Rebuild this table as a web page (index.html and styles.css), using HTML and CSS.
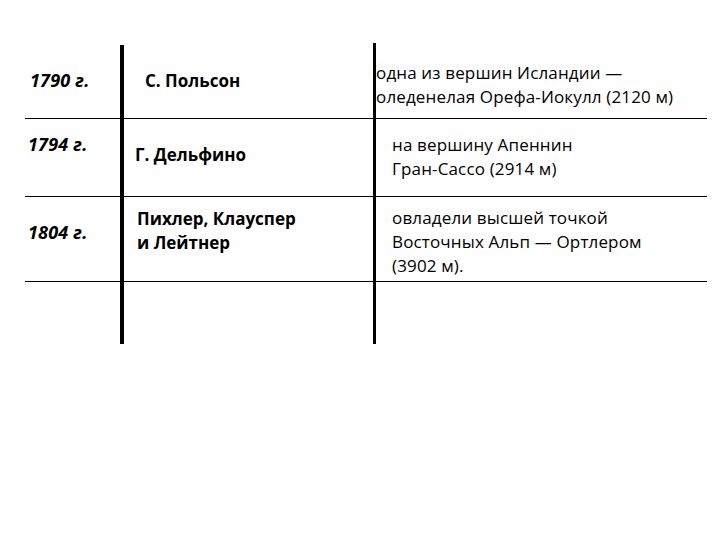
FILE: index.html
```html
<!DOCTYPE html>
<html lang="ru">
<head>
<meta charset="utf-8">
<title>Восхождения</title>
<link rel="stylesheet" href="styles.css">
</head>
<body>
<div class="table">
  <div class="row r1">
    <div class="cell c1"><span class="year y1">1790 г.</span></div>
    <div class="cell c2"><div class="name n1">С. Польсон</div></div>
    <div class="cell c3"><div class="desc d1">одна из вершин Исландии —<br>оледенелая Орефа-Иокулл (2120 м)</div></div>
  </div>
  <div class="row r2">
    <div class="cell c1"><span class="year y2">1794 г.</span></div>
    <div class="cell c2"><div class="name n2">Г. Дельфино</div></div>
    <div class="cell c3"><div class="desc d2">на вершину Апеннин<br>Гран-Сассо (2914 м)</div></div>
  </div>
  <div class="row r3">
    <div class="cell c1"><span class="year y3">1804 г.</span></div>
    <div class="cell c2"><div class="name n3">Пихлер, Клауспер<br>и Лейтнер</div></div>
    <div class="cell c3"><div class="desc d3">овладели высшей точкой<br>Восточных Альп — Ортлером<br>(3902 м).</div></div>
  </div>
  <div class="row r4">
    <div class="cell c1"></div>
    <div class="cell c2"></div>
    <div class="cell c3"></div>
  </div>
</div>
</body>
</html>
```

FILE: styles.css
```css
html, body {
  margin: 0;
  padding: 0;
  background: #ffffff;
}

body {
  font-family: "Open Sans", "Noto Sans", sans-serif;
  font-size: 17px;
  line-height: 24px;
  color: #000000;
  width: 720px;
  height: 540px;
  overflow: hidden;
}

.table {
  margin: 45px 0 0 25px;
  width: 682px;
  display: flex;
  flex-direction: column;
}

.row {
  display: flex;
  border-bottom: 1px solid #000;
}

.r1 { height: 73px; }
.r2 { height: 77px; }
.r3 { height: 84px; }
.r4 { height: 61px; border-bottom: none; }

.cell {
  box-sizing: border-box;
}

.c1 {
  width: 95px;
  margin-bottom: -1px;
}

.c2 {
  width: 253px;
  border-left: 4px solid #000;
  margin-bottom: -1px;
  position: relative;
  z-index: 1;
}

.c3 {
  flex: 1;
  border-left: 3px solid #000;
  margin-bottom: -1px;
  position: relative;
  z-index: 1;
}

.r1 .c3 { margin-top: -2px; }

.year {
  display: block;
  font-weight: 700;
  font-style: italic;
  font-size: 18px;
  letter-spacing: 0.2px;
}

.name {
  font-weight: 700;
  font-size: 17px;
}

.desc {
  font-size: 17px;
  letter-spacing: 0.15px;
}

.y1 { padding: 23px 0 0 5px; }
.y2 { padding: 13px 0 0 3px; }
.y3 { padding: 23px 0 0 3px; }

.n1 { padding: 24px 0 0 21px; }
.n2 { padding: 24px 0 0 11px; }
.n3 { padding: 10px 0 0 13px; line-height: 24px; }

.d1 { padding: 18px 0 0 0; }
.d2 { padding: 14px 0 0 16px; }
.d3 { padding: 9px 0 0 16px; }
```
